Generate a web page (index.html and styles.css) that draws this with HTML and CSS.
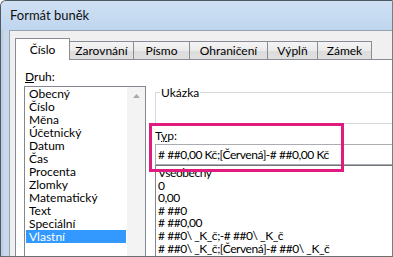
FILE: index.html
```html
<!DOCTYPE html>
<html lang="cs">
  <head>
    <meta charset="UTF-8" />
    <meta name="viewport" content="width=device-width, initial-scale=1.0" />
    <title>Formát buněk</title>
    <link rel="stylesheet" href="styles.css">
  </head>
  <body>
    <div class="window">
      <div class="titlebar">Formát buněk</div>
      <div class="client">
        <div class="tabs">
          <div class="tab active" style="width: 55px">Číslo</div>
          <div class="tab" style="width: 64px">Zarovnání</div>
          <div class="tab" style="width: 56px">Písmo</div>
          <div class="tab" style="width: 78px">Ohraničení</div>
          <div class="tab" style="width: 50px">Výplň</div>
          <div class="tab" style="width: 54px">Zámek</div>
        </div>
        <div class="page">
          <div class="category">
            <div class="label"><u>D</u>ruh:</div>
            <div class="listbox">
              <ul class="items">
                <li>Obecný</li>
                <li>Číslo</li>
                <li>Měna</li>
                <li>Účetnický</li>
                <li>Datum</li>
                <li>Čas</li>
                <li>Procenta</li>
                <li>Zlomky</li>
                <li>Matematický</li>
                <li>Text</li>
                <li>Speciální</li>
                <li class="selected">Vlastní</li>
              </ul>
              <div class="scrollbar">
                <svg width="7" height="4" viewBox="0 0 7 4"><path d="M0 4 L3.5 0 L7 4 Z" fill="#a8a8a8"/></svg>
              </div>
            </div>
          </div>
          <div class="details">
            <div class="sample">
              <span class="sample-title">Ukázka</span>
            </div>
            <div class="label">T<u>y</u>p:</div>
            <div class="input"># ##0,00 Kč;[Červená]-# ##0,00 Kč</div>
            <ul class="typelist">
              <li>Všeobecný</li>
              <li>0</li>
              <li>0,00</li>
              <li># ##0</li>
              <li># ##0,00</li>
              <li># ##0\ _K_č;-# ##0\ _K_č</li>
              <li># ##0\ _K_č;[Červená]-# ##0\ _K_č</li>
            </ul>
          </div>
        </div>
      </div>
      <div class="highlight"></div>
    </div>
  </body>
</html>
```

FILE: styles.css
```css
html, body {
    margin: 0;
    padding: 0;
    background: #ffffff;
}

body {
    font-family: Lato, "Noto Sans", sans-serif;
    font-size: 12px;
    color: #000;
}

.window {
    position: relative;
    width: 391px;
    height: 255px;
    overflow: hidden;
    background: linear-gradient(90deg, #b9cbe0, #c8d9ec 4px, #c6d8ec);
    border-top: 1px solid #4f5964;
    border-left: 1px solid #4f5964;
    border-right: 1px solid #7d7d7d;
    border-bottom: 1px solid #6d6d6d;
    border-top-left-radius: 6px;
    display: flex;
    flex-direction: column;
}

.titlebar {
    height: 29px;
    line-height: 29px;
    padding-left: 9px;
    font-size: 13px;
    background: linear-gradient(#cfe0f3, #bfd6ef);
    color: #111;
}

.client {
    flex: 1;
    margin-left: 8px;
    background: #f0f0f0;
    border-top: 1px solid #97a3b0;
    border-left: 1px solid #97a3b0;
    padding: 7px 0 0 5px;
    display: flex;
    flex-direction: column;
}

.tabs {
    display: flex;
    align-items: flex-end;
    height: 21px;
}

.tab {
    box-sizing: border-box;
    height: 18px;
    line-height: 17px;
    text-align: center;
    border: 1px solid #898c95;
    border-bottom: none;
    background: linear-gradient(#f4f4f4, #ebebeb 50%, #dcdcdc 51%, #e0e0e0);
    white-space: nowrap;
}

.tab + .tab {
    border-left: none;
}

.tab.active {
    position: relative;
    z-index: 1;
    height: 22px;
    line-height: 21px;
    margin-bottom: -1px;
    background: #ffffff;
    border-right: 1px solid #898c95;
}

.page {
    flex: 1;
    width: 600px;
    background: #ffffff;
    border-top: 1px solid #898c95;
    border-left: 1px solid #898c95;
    padding: 10px 0 0 8px;
    display: flex;
}

.label {
    height: 13px;
    line-height: 13px;
    padding-left: 1px;
    margin-bottom: 3px;
}

.listbox {
    display: flex;
    width: 120px;
    height: 200px;
    border: 1px solid #828790;
}

.items {
    list-style: none;
    margin: 0;
    padding: 0 1px;
    width: 100px;
}

.items li {
    height: 13px;
    line-height: 13px;
    padding-left: 3px;
}

.items li.selected {
    background: #3399ff;
    color: #ffffff;
}

.scrollbar {
    width: 18px;
    background: #f3f3f3;
    display: flex;
    justify-content: center;
    padding-top: 7px;
    box-sizing: border-box;
}

.details {
    margin-left: 9px;
    flex: 1;
}

.sample {
    margin-top: 22px;
    height: 30px;
    border: 1px solid #d5d9de;
    padding-left: 4px;
    margin-bottom: 5px;
}

.sample-title {
    display: inline-block;
    vertical-align: top;
    margin-top: -7px;
    padding: 0 1px;
    line-height: 13px;
    background: #ffffff;
}

.details .label {
    padding-left: 0;
    margin-bottom: 2px;
}

.input {
    box-sizing: border-box;
    height: 21px;
    line-height: 19px;
    padding-left: 2px;
    border: 1px solid #abadb3;
    white-space: nowrap;
    letter-spacing: -0.45px;
}

.typelist {
    list-style: none;
    margin: 0;
    padding: 1px 0 0 2px;
    height: 120px;
    border: 1px solid #828790;
    border-top-color: #6f737a;
    letter-spacing: -0.45px;
}

.typelist li {
    height: 12.6px;
    line-height: 12.6px;
    white-space: nowrap;
}

.highlight {
    position: absolute;
    left: 148px;
    top: 122px;
    width: 195px;
    height: 49px;
    box-sizing: border-box;
    border: 3px solid #df1b7f;
}
```
